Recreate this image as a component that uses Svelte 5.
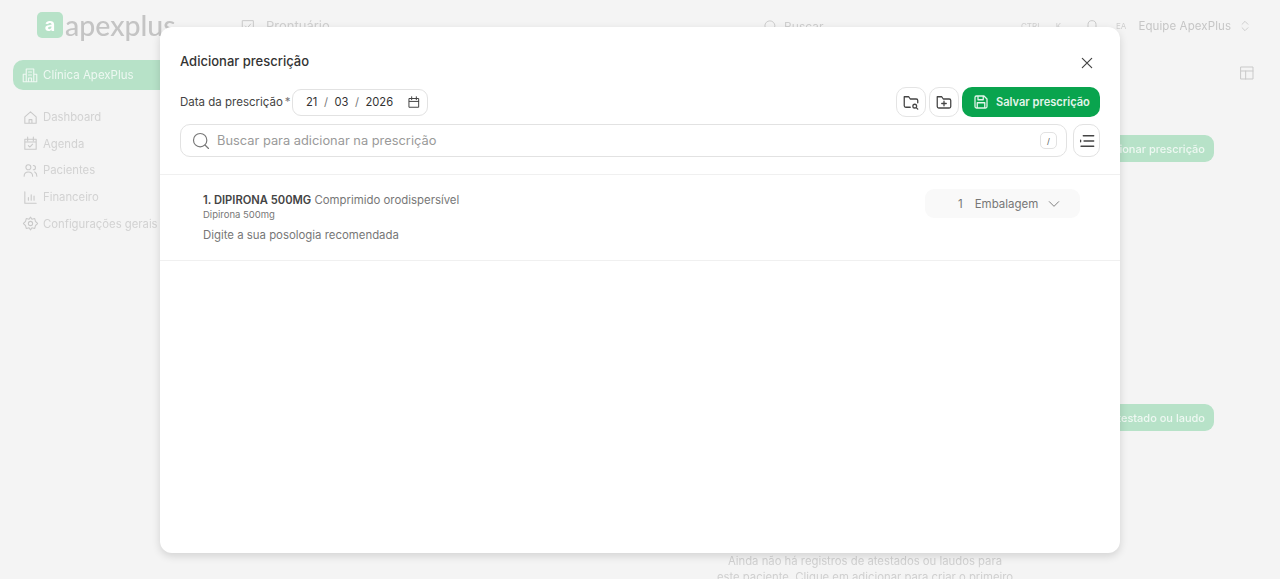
<script lang="ts">
	// Prescription modal open over a dimmed patient record page.
	const nav = [
		{ label: 'Dashboard', d: 'M4 11l8-7 8 7v9H4zM10 20v-5h4v5' },
		{ label: 'Agenda', d: 'M4 6h16v14H4zM4 10h16M8 3v5M16 3v5M9 15l2 2 4-4' },
		{ label: 'Pacientes', d: 'M9 11a3.5 3.5 0 1 0 0-7 3.5 3.5 0 0 0 0 7zM3 20c0-4 3-6 6-6s6 2 6 6M16 5a3 3 0 0 1 0 6M18 14c2 1 3 3 3 6' },
		{ label: 'Financeiro', d: 'M4 4v16h16M9 16v-4M13 16V8M17 16v-6' },
		{ label: 'Configurações gerais', d: 'M12 15a3 3 0 1 0 0-6 3 3 0 0 0 0 6zM12 3l2 3 4-1 1 4 3 3-3 3-1 4-4-1-2 3-2-3-4 1-1-4-3-3 3-3 1-4 4 1z' }
	];
</script>

<div class="page">
	<div class="backdrop" aria-hidden="true">
		<header class="topbar">
			<div class="logo">
				<span class="logo-mark">a</span>
				<span class="logo-text">apexplus</span>
			</div>
			<div class="crumb">
				<svg width="16" height="16" viewBox="0 0 24 24" class="ico"><path d="M4 4h16v16H4zM8 12l3 3 5-6" /></svg>
				Prontuário
			</div>
			<div class="find">
				<svg width="15" height="15" viewBox="0 0 24 24" class="ico"><path d="M11 19a8 8 0 1 0 0-16 8 8 0 0 0 0 16zM21 21l-4-4" /></svg>
				Buscar
			</div>
			<span class="kbd">CTRL</span>
			<span class="kbd k">K</span>
			<svg class="bell ico" width="16" height="16" viewBox="0 0 24 24"><path d="M6 17V10a6 6 0 0 1 12 0v7l2 2H4zM10 21h4" /></svg>
			<span class="initials">EA</span>
			<span class="team">Equipe ApexPlus</span>
			<svg class="ico" width="14" height="18" viewBox="0 0 24 24"><path d="M7 9l5-5 5 5M7 15l5 5 5-5" /></svg>
		</header>

		<div class="body">
			<aside class="sidebar">
				<div class="clinic">
					<svg width="18" height="18" viewBox="0 0 24 24" class="ico light"><path d="M7 21V4h10v17M7 11H3v10h18V11h-4M10 8h4M10 12h4M10 21v-5h4v5" /></svg>
					Clínica ApexPlus
				</div>
				<nav class="menu">
					{#each nav as item}
						<div class="menu-item">
							<svg width="17" height="17" viewBox="0 0 24 24" class="ico"><path d={item.d} /></svg>
							{item.label}
						</div>
					{/each}
				</nav>
			</aside>

			<main class="content">
				<div class="panel-icon">
					<svg width="16" height="16" viewBox="0 0 24 24" class="ico"><path d="M3 3h18v18H3zM3 9h18M10 9v12" /></svg>
				</div>
				<button class="ghost-btn first">Adicionar prescrição</button>
				<button class="ghost-btn second">Adicionar atestado ou laudo</button>
				<p class="empty">Ainda não há registros de atestados ou laudos para<br />este paciente. Clique em adicionar para criar o primeiro</p>
			</main>
		</div>
	</div>

	<div class="modal" role="dialog" aria-label="Adicionar prescrição">
		<div class="modal-head">
			<h2>Adicionar prescrição</h2>
			<button class="close" aria-label="Fechar">
				<svg width="16" height="16" viewBox="0 0 24 24"><path d="M5 5l14 14M19 5L5 19" /></svg>
			</button>
		</div>

		<div class="toolbar">
			<span class="date-label">Data da prescrição<em>*</em></span>
			<div class="date-box">
				<span>21</span><i>/</i><span>03</span><i>/</i><span>2026</span>
				<svg width="14" height="14" viewBox="0 0 24 24"><path d="M4 6h16v15H4zM4 11h16M8 3v5M16 3v5" /></svg>
			</div>
			<div class="actions">
				<button class="square" aria-label="Buscar modelos">
					<svg width="18" height="18" viewBox="0 0 24 24"><path d="M11 19H5a2 2 0 0 1-2-2V5h6l2 3h8a2 2 0 0 1 2 2v3M17 20a2.5 2.5 0 1 0 0-5 2.5 2.5 0 0 0 0 5zM19 19.5l2 2" /></svg>
				</button>
				<button class="square" aria-label="Salvar modelo">
					<svg width="18" height="18" viewBox="0 0 24 24"><path d="M5 20a2 2 0 0 1-2-2V5h6l2 3h8a2 2 0 0 1 2 2v8a2 2 0 0 1-2 2zM12 11v6M9 14h6" /></svg>
				</button>
				<button class="save">
					<svg width="18" height="18" viewBox="0 0 24 24"><path d="M4 6a2 2 0 0 1 2-2h10l4 4v10a2 2 0 0 1-2 2H6a2 2 0 0 1-2-2zM8 4v5h7V4M7 20v-7h10v7" /></svg>
					Salvar prescrição
				</button>
			</div>
		</div>

		<div class="search-row">
			<label class="search">
				<svg width="20" height="20" viewBox="0 0 24 24"><path d="M11 19a8 8 0 1 0 0-16 8 8 0 0 0 0 16zM21 21l-4.5-4.5" /></svg>
				<input type="text" placeholder="Buscar para adicionar na prescrição" />
				<span class="slash">/</span>
			</label>
			<button class="list-btn" aria-label="Ordenar">
				<svg width="18" height="18" viewBox="0 0 24 24"><path d="M7 5h14M8 12h13M4 19h17M3.500 11v2" /></svg>
			</button>
		</div>

		<div class="item">
			<div class="item-text">
				<div class="item-title"><strong>1. DIPIRONA 500MG</strong> Comprimido orodispersível</div>
				<div class="item-sub">Dipirona 500mg</div>
				<div class="item-note">Digite a sua posologia recomendada</div>
			</div>
			<div class="qty">
				<span>1</span>
				<span>Embalagem</span>
				<svg width="14" height="14" viewBox="0 0 24 24"><path d="M4 8l8 8 8-8" /></svg>
			</div>
		</div>
	</div>
</div>

<style>
	:global(body) {
		margin: 0;
		background: #f4f4f4;
	}
	.page {
		position: relative;
		width: 1280px;
		height: 579px;
		overflow: hidden;
		background: #f4f4f4;
		font-family: Inter, 'Liberation Sans', sans-serif;
		color: #333;
	}
	svg path {
		fill: none;
		stroke: currentColor;
		stroke-width: 2;
		stroke-linecap: round;
		stroke-linejoin: round;
	}
	.backdrop {
		display: flex;
		flex-direction: column;
		height: 100%;
		color: #c9c9c9;
		filter: blur(0.4px);
	}
	.ico {
		flex: none;
		color: #c9c9c9;
	}
	.ico path {
		stroke-width: 1.5;
	}
	.topbar {
		display: flex;
		align-items: center;
		height: 52px;
		font-size: 12px;
		flex: none;
	}
	.logo {
		display: flex;
		align-items: center;
		gap: 2px;
		margin: -2px 0 0 37px;
		width: 203px;
	}
	.logo-mark {
		display: flex;
		align-items: center;
		justify-content: center;
		width: 26px;
		height: 26px;
		border-radius: 5px;
		background: #b7e2c8;
		color: #fff;
		font: 700 18px/1 Inter, sans-serif;
	}
	.logo-text {
		font: 500 28.5px/1 Lato, Inter, sans-serif;
		color: #c4c4c4;
	}
	.crumb {
		display: flex;
		align-items: center;
		gap: 10px;
		width: 523px;
		font-size: 13px;
		color: #cfcfcf;
	}
	.find {
		display: flex;
		align-items: center;
		gap: 6px;
		width: 258px;
		color: #cfcfcf;
	}
	.kbd {
		font-size: 8px;
		color: #d0d0d0;
	}
	.k {
		margin-left: 14px;
	}
	.bell {
		margin-left: 23px;
	}
	.initials {
		margin-left: 16px;
		font-size: 8px;
		color: #cfcfcf;
	}
	.team {
		margin-left: 12px;
		margin-right: 7px;
		font-size: 11.5px;
		color: #c6c6c6;
		letter-spacing: 0.1px;
	}
	.body {
		display: flex;
		flex: 1;
		min-height: 0;
	}
	.sidebar {
		width: 180px;
		flex: none;
		padding: 8px 0 0 13px;
		box-sizing: border-box;
	}
	.clinic {
		display: flex;
		align-items: center;
		gap: 4px;
		height: 30px;
		padding-left: 8px;
		border-radius: 10px;
		background: #b7e2c8;
		color: #eef8f2;
		font-size: 11.5px;
	}
	.clinic .light {
		color: #eef8f2;
	}
	.menu {
		display: flex;
		flex-direction: column;
		gap: 8.7px;
		margin-top: 18px;
		padding-left: 9px;
	}
	.menu-item {
		display: flex;
		align-items: center;
		gap: 4px;
		height: 18px;
		font-size: 11.3px;
		white-space: nowrap;
		color: #d2d2d2;
	}
	.content {
		flex: 1;
		display: flex;
		flex-direction: column;
		align-items: flex-end;
		padding-right: 66px;
	}
	.panel-icon {
		flex: none;
		margin: 13px -41px 0 0;
		height: 16px;
	}
	.ghost-btn {
		flex: none;
		height: 27px;
		border: 0;
		border-radius: 9px;
		padding: 0 9px;
		background: #b7e2c8;
		color: #eef8f2;
		font: 500 11px Inter, sans-serif;
		white-space: nowrap;
	}
	.first {
		margin-top: 54px;
	}
	.second {
		margin-top: 242px;
	}
	.empty {
		flex: none;
		align-self: flex-start;
		margin: 122px 0 0 520px;
		width: 330px;
		text-align: center;
		font-size: 11.3px;
		line-height: 16px;
		color: #d0d0d0;
		white-space: nowrap;
	}

	.modal {
		position: absolute;
		left: 160px;
		top: 27px;
		width: 960px;
		height: 526px;
		box-sizing: border-box;
		background: #fff;
		border-radius: 12px;
		box-shadow: 0 3px 9px rgba(0, 0, 0, 0.14);
	}
	.modal-head {
		display: flex;
		align-items: center;
		justify-content: space-between;
		box-sizing: border-box;
		height: 62px;
		padding: 5px 25px 0 20px;
	}
	h2 {
		margin: 0;
		font-size: 13px;
		font-weight: 500;
		color: #333;
	}
	.close {
		display: flex;
		padding: 0;
		border: 0;
		background: none;
		color: #444;
		margin-top: 5px;
	}
	.close path {
		stroke-width: 1.8;
	}
	.toolbar {
		display: flex;
		align-items: center;
		padding: 0 20px;
		height: 30px;
		margin-top: -2px;
	}
	.date-label {
		font-size: 11.5px;
		color: #444;
		width: 112px;
		white-space: nowrap;
	}
	.date-label em {
		font-style: normal;
		color: #777;
		margin-left: 2px;
	}
	.date-box {
		display: flex;
		align-items: center;
		box-sizing: border-box;
		width: 136px;
		height: 27px;
		padding: 0 6px 0 13px;
		gap: 6.5px;
		border: 1px solid #e2e2e2;
		border-radius: 9px;
		font-size: 11.2px;
		color: #333;
	}
	.date-box i {
		font-style: normal;
		color: #777;
	}
	.date-box svg {
		margin-left: auto;
		color: #444;
	}
	.date-box svg path {
		stroke-width: 1.7;
	}
	.actions {
		display: flex;
		align-items: center;
		gap: 3px;
		margin-left: auto;
	}
	.square {
		display: flex;
		align-items: center;
		justify-content: center;
		width: 30px;
		height: 30px;
		padding: 0;
		border: 1px solid #e4e4e4;
		border-radius: 10px;
		background: #fff;
		color: #444;
	}
	.square path,
	.list-btn path {
		stroke-width: 1.7;
	}
	.save {
		display: flex;
		align-items: center;
		gap: 6px;
		width: 138px;
		height: 30px;
		box-sizing: border-box;
		padding: 0 0 0 10px;
		border: 0;
		border-radius: 10px;
		background: #09a44e;
		color: #e4f5eb;
		font: 600 11.1px Inter, sans-serif;
		white-space: nowrap;
	}
	.save path {
		stroke-width: 1.7;
	}
	.search-row {
		display: flex;
		gap: 6px;
		padding: 0 20px;
		margin-top: 7px;
	}
	.search {
		flex: 1;
		display: flex;
		align-items: center;
		gap: 6px;
		height: 33px;
		box-sizing: border-box;
		padding: 0 9px 0 10px;
		border: 1px solid #e2e2e2;
		border-radius: 10px;
		color: #777;
	}
	.search svg path {
		stroke-width: 1.4;
	}
	.search input {
		flex: 1;
		min-width: 0;
		border: 0;
		outline: 0;
		padding: 0;
		background: none;
		font: 400 12.85px Inter, sans-serif;
	}
	.search input::placeholder {
		color: #9a9a9a;
	}
	.slash {
		display: flex;
		align-items: center;
		justify-content: center;
		width: 15px;
		height: 15px;
		border: 1px solid #e2e2e2;
		border-radius: 5px;
		font-size: 8px;
		color: #555;
	}
	.list-btn {
		display: flex;
		align-items: center;
		justify-content: center;
		width: 27px;
		height: 33px;
		padding: 0;
		border: 1px solid #e2e2e2;
		border-radius: 10px;
		background: #fff;
		color: #444;
	}
	.item {
		display: flex;
		align-items: flex-start;
		justify-content: space-between;
		height: 87px;
		box-sizing: border-box;
		margin-top: 17px;
		padding: 14px 40px 0 43px;
		border-top: 1px solid #f0f0f0;
		border-bottom: 1px solid #f0f0f0;
	}
	.item-text {
		padding-top: 2px;
	}
	.item-title {
		font-size: 11.4px;
		line-height: 18px;
		color: #777;
		white-space: nowrap;
	}
	.item-title strong {
		font-weight: 600;
		font-size: 11.2px;
		color: #444;
	}
	.item-sub {
		font-size: 9.5px;
		line-height: 12px;
		color: #777;
	}
	.item-note {
		margin-top: 6px;
		font-size: 11.4px;
		line-height: 16px;
		color: #777;
	}
	.qty {
		display: flex;
		align-items: center;
		width: 155px;
		height: 29px;
		box-sizing: border-box;
		padding-left: 33px;
		gap: 12px;
		border-radius: 9px;
		background: #f9f9f9;
		font-size: 11.5px;
		color: #777;
	}
	.qty svg {
		margin-left: -3px;
		color: #777;
	}
	.qty svg path {
		stroke-width: 1.6;
	}
</style>
